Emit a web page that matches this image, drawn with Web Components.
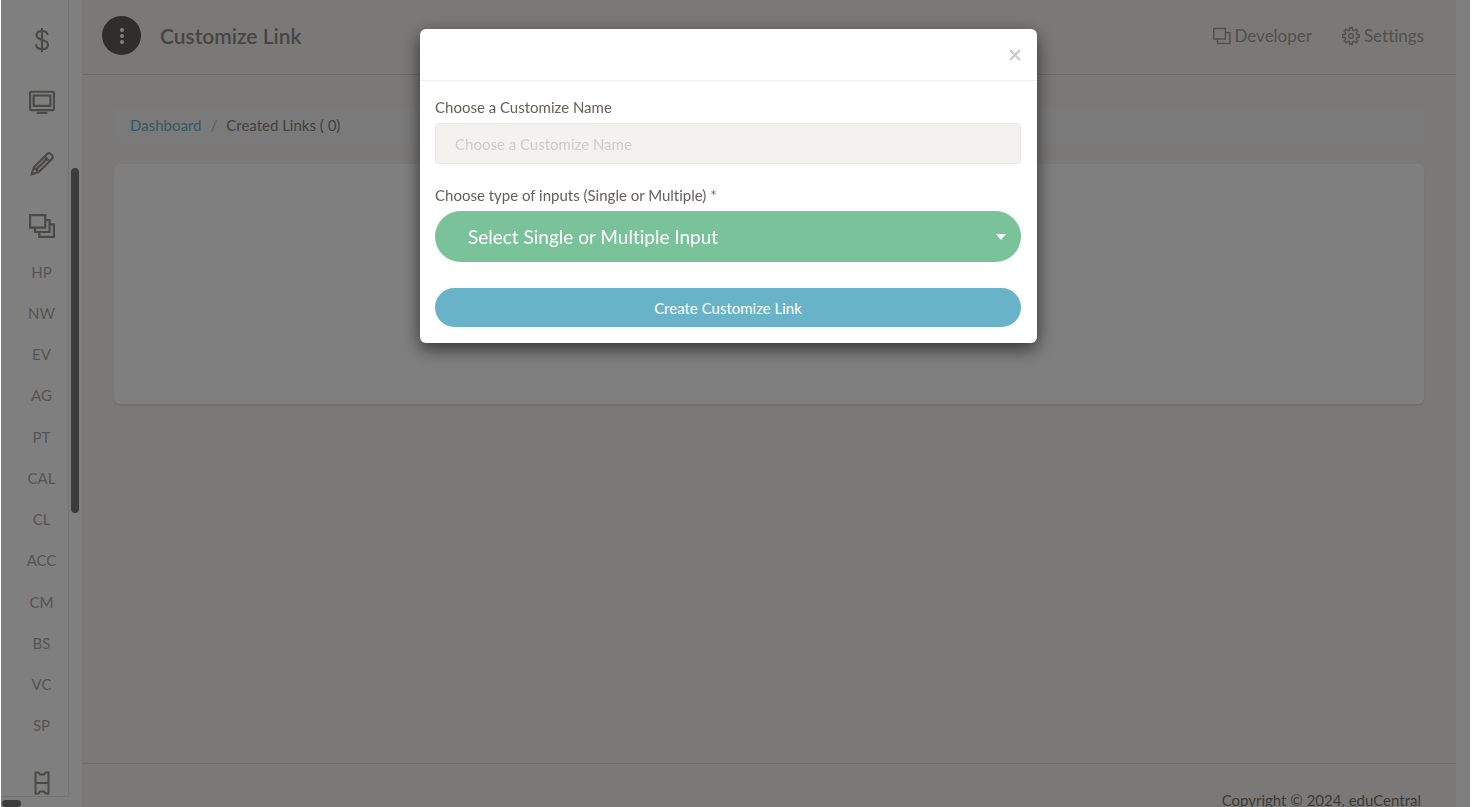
<!DOCTYPE html>
<html lang="en">
<head>
<meta charset="utf-8">
<title>Customize Link</title>
<style>
    html, body{
        height: 100%;
        margin: 0;
    }

    body{
        overflow: hidden;
        background: #fff;
        font-family: Lato, "Noto Sans", sans-serif;
        font-size: 15px;
        font-variant-ligatures: none;
        line-height: 20px;
        color: #84827f;
        --blue: #68b3c8;
        --green: #7ac29a;
        --ground: #f4f3ef;
    }
</style>
</head>
<body>
<app-shell>
    <side-menu slot="side"></side-menu>
    <top-bar slot="main" heading="Customize Link">
        <tool-link icon="layers2">Developer</tool-link>
        <tool-link icon="settings">Settings</tool-link>
    </top-bar>
    <link-page slot="main">Created Links ( 0)</link-page>
    <page-footer slot="main">Copyright © 2024, eduCentral</page-footer>
</app-shell>
<modal-dialog>
    <link-form></link-form>
</modal-dialog>

<script>
const ICONS = {
    money: '<path d="M12 1v22M17 7.500C17 5 15 3.700 12 3.700S7 5.200 7 7.700c0 5.600 10.500 3 10.500 8.600 0 2.700-2.300 4.200-5.500 4.200s-5.500-1.800-5.500-4.500"/>',
    desktop: '<rect x="1" y="2.500" width="22" height="17" rx="1"/><path d="M4.300 6h15.400v9.500H4.300z"/><path d="M7 22h10" />',
    pencil: '<path d="M2.500 21.500l2-6.500L17 2.500c2-1.500 6 2 4.500 4.500L9 19.500zM4.500 15l4.500 4.500M14.500 5l4.500 4.500M6.500 17.200L17 6.800"/>',
    layers: '<path d="M1 2h14v11.500H1z"/><path d="M5.500 13.500v4H19V6.500h-4M9.500 17.500v4.500H23V10.500h-4"/>',
    layers2: '<path d="M1 2h15.500v14H1z"/><path d="M6 16v6h16.500V7.500h-6"/>',
    ticket: '<path d="M5.500 1.500h3l1.500 2h4l1.500-2h3v21h-3l-1.500-2h-4l-1.500 2h-3zM5.500 12h13"/>',
    settings: '<circle cx="12" cy="12" r="3"/><path d="M10.300 1h3.400l.5 3.200 1.800.8 2.700-2 2.300 2.300-2 2.700.8 1.800 3.200.5v3.400l-3.200.5-.8 1.800 2 2.700-2.300 2.300-2.700-2-1.800.8-.5 3.200h-3.400l-.5-3.200-1.800-.8-2.700 2L3 18.700 5 16l-.8-1.800L1 13.700v-3.400l3.200-.5L5 8 3 5.300 5.300 3 8 5l1.800-.8z"/>'
}

function icon(name, size){
    return `<svg width="${size}" height="${size}" viewBox="0 0 24 24" fill="none" stroke="currentColor" stroke-width="2" aria-hidden="true">${ICONS[name]}</svg>`
}

class AppShell extends HTMLElement{

    connectedCallback(){
        this.attachShadow({mode: 'open'}).innerHTML = `
        <style>
        :host{
            display: flex;
            height: 100%;
            margin: 0 2px 0 1px;
        }

        main{
            flex: 1;
            display: flex;
            flex-direction: column;
            margin-right: 14px;
            background: var(--ground);
        }
        </style>
        <slot name="side"></slot>
        <main><slot name="main"></slot></main>
        `
    }
}

class SideMenu extends HTMLElement{

    connectedCallback(){
        const icons = [['money', 'Payments'], ['desktop', 'Desktop'], ['pencil', 'Edit'], ['layers', 'Pages']]
        const codes = ['HP', 'NW', 'EV', 'AG', 'PT', 'CAL', 'CL', 'ACC', 'CM', 'BS', 'VC', 'SP']
        this.attachShadow({mode: 'open'}).innerHTML = `
        <style>
        :host{
            display: flex;
            position: relative;
            width: 81px;
            box-sizing: border-box;
            padding-bottom: 10px;
        }

        nav{
            display: flex;
            flex-direction: column;
            width: 67px;
            padding-top: 3px;
            border-right: 1px solid #eae9e6;
            border-bottom: 1px solid #eae9e6;
        }

        a{
            display: flex;
            align-items: center;
            justify-content: center;
            text-decoration: none;
        }

        .icon{
            height: 50px;
            padding: 12px 0 0 15px;
            color: #94928f;
        }

        .codes{
            flex: 1;
            display: flex;
            flex-direction: column;
        }

        .code{
            flex: 1;
            padding-left: 14px;
            color: #aaa8a6;
        }

        .last{
            height: 26px;
            padding-top: 24px;
        }

        /* scrollbar thumbs float over the menu edges */
        .thumb{
            position: absolute;
            border-radius: 4px;
            background: #787878;
        }

        .vertical{
            top: 168px;
            right: 3px;
            width: 8px;
            height: 345px;
        }

        .horizontal{
            left: 1px;
            bottom: 0;
            width: 19px;
            height: 7px;
        }
        </style>
        <nav>
            ${icons.map(([name, label]) => `<a class="icon" href="#" aria-label="${label}">${icon(name, 26)}</a>`).join('')}
            <div class="codes">
                ${codes.map(code => `<a class="code" href="#">${code}</a>`).join('')}
            </div>
            <a class="icon last" href="#" aria-label="Tickets">${icon('ticket', 24)}</a>
        </nav>
        <span class="thumb vertical"></span>
        <span class="thumb horizontal"></span>
        `
    }
}

class TopBar extends HTMLElement{

    connectedCallback(){
        this.attachShadow({mode: 'open'}).innerHTML = `
        <style>
        :host{
            display: flex;
            align-items: center;
            gap: 19px;
            padding: 16px 32px 19px 20px;
            border-bottom: 1px solid #d6d4ce;
        }

        button{
            display: flex;
            align-items: center;
            justify-content: center;
            width: 39px;
            height: 39px;
            padding: 0;
            border: 0;
            border-radius: 50%;
            background: #605d58;
        }

        h1{
            margin: 0;
            font-size: 21px;
            font-weight: 600;
            color: #8a8a8a;
        }

        .tools{
            display: flex;
            gap: 30px;
            margin-left: auto;
        }
        </style>
        <button type="button" aria-label="Toggle menu">
            <svg width="4" height="16" viewBox="0 0 4 16" fill="#fff"><circle cx="2" cy="2" r="2"/><circle cx="2" cy="8" r="2"/><circle cx="2" cy="14" r="2"/></svg>
        </button>
        <h1>${this.getAttribute('heading')}</h1>
        <div class="tools"><slot></slot></div>
        `
    }
}

class ToolLink extends HTMLElement{

    connectedCallback(){
        this.attachShadow({mode: 'open'}).innerHTML = `
        <style>
        a{
            display: flex;
            align-items: center;
            gap: 4px;
            font-size: 17px;
            color: #a3a19d;
            text-decoration: none;
        }
        </style>
        <a href="#">${icon(this.getAttribute('icon'), 18)}<slot></slot></a>
        `
    }
}

class LinkPage extends HTMLElement{

    connectedCallback(){
        this.attachShadow({mode: 'open'}).innerHTML = `
        <style>
        :host{
            display: flex;
            flex-direction: column;
            gap: 21px;
            flex: 1;
            padding: 32px 32px 0;
        }

        nav{
            display: flex;
            gap: 9px;
            padding: 8px 16px;
            border-radius: 4px;
            background: #f5f5f6;
        }

        a{
            color: var(--blue);
            text-decoration: none;
        }

        .slash{
            color: #b8b8b8;
        }

        .card{
            height: 240px;
            border-radius: 6px;
            background: #fff;
            box-shadow: 0 2px 2px rgba(204, 197, 185, .5);
        }
        </style>
        <nav aria-label="Breadcrumb">
            <a href="#">Dashboard</a>
            <span class="slash">/</span>
            <span><slot></slot></span>
        </nav>
        <section class="card"></section>
        `
    }
}

class PageFooter extends HTMLElement{

    connectedCallback(){
        this.attachShadow({mode: 'open'}).innerHTML = `
        <style>
        footer{
            height: 17px;
            padding: 26px 35px 0;
            border-top: 1px solid #dcdad4;
            text-align: right;
            color: #7a7670;
        }
        </style>
        <footer><slot></slot></footer>
        `
    }
}

class ModalDialog extends HTMLElement{

    connectedCallback(){
        this.attachShadow({mode: 'open'}).innerHTML = `
        <style>
        /* the backdrop lies over the whole page */
        :host{
            position: fixed;
            inset: 0 2px 0 1px;
            display: flex;
            align-items: flex-start;
            justify-content: center;
            padding: 29px 14px 0 0;
            background: rgba(0, 0, 0, .5);
        }

        .dialog{
            width: 100%;
            max-width: 617px;
            border-radius: 6px;
            background: #fff;
            box-shadow: 0 6px 18px rgba(0, 0, 0, .6);
        }

        header{
            display: flex;
            justify-content: flex-end;
            padding: 16px;
            border-bottom: 1px solid #eee;
        }

        button{
            display: flex;
            align-items: center;
            height: 19px;
            padding: 0;
            border: 0;
            background: none;
            color: #c8c8c8;
        }
        </style>
        <div class="dialog" role="dialog" aria-modal="true" aria-label="Create link">
            <header>
                <button type="button" aria-label="Close">
                    <svg width="12" height="12" viewBox="0 0 12 12" fill="none" stroke="currentColor" stroke-width="2"><path d="M1 1l10 10M11 1L1 11"/></svg>
                </button>
            </header>
            <slot></slot>
        </div>
        `
        this.shadowRoot.querySelector('button').addEventListener('click', () => this.remove())
    }
}

class LinkForm extends HTMLElement{

    connectedCallback(){
        this.attachShadow({mode: 'open'}).innerHTML = `
        <style>
        form{
            display: flex;
            flex-direction: column;
            padding: 16px 16px 16px 15px;
            color: #66615b;
        }

        label{
            margin-bottom: 6px;
        }

        input, select, button{
            width: 100%;
            box-sizing: border-box;
            font: inherit;
        }

        input{
            height: 41px;
            margin-bottom: 21px;
            padding: 0 19px;
            border: 1px solid #e8e7e3;
            border-radius: 4px;
            background: #f3f2ee;
        }

        input::placeholder{
            color: #cfcdc8;
            opacity: 1;
        }

        .select{
            display: grid;
            align-items: center;
            margin-bottom: 26px;
            color: #fff;
        }

        .select > *{
            grid-area: 1 / 1;
        }

        .select svg{
            justify-self: end;
            margin-right: 15px;
            pointer-events: none;
        }

        select{
            height: 51px;
            padding: 0 33px;
            border: 0;
            border-radius: 26px;
            appearance: none;
            background: var(--green);
            color: #fff;
            font-size: 19px;
        }

        button{
            height: 39px;
            border: 0;
            border-radius: 20px;
            background: var(--blue);
            color: #fff;
        }
        </style>
        <form>
            <label for="name">Choose a Customize Name</label>
            <input id="name" type="text" placeholder="Choose a Customize Name">
            <label for="type">Choose type of inputs (Single or Multiple) *</label>
            <div class="select">
                <select id="type">
                    <option>Select Single or Multiple Input</option>
                    <option>Single</option>
                    <option>Multiple</option>
                </select>
                <svg width="10" height="6" viewBox="0 0 10 6" fill="currentColor" aria-hidden="true"><path d="M0 0h10L5 6z"/></svg>
            </div>
            <button type="button">Create Customize Link</button>
        </form>
        `
    }
}

customElements.define('app-shell', AppShell)
customElements.define('side-menu', SideMenu)
customElements.define('top-bar', TopBar)
customElements.define('tool-link', ToolLink)
customElements.define('link-page', LinkPage)
customElements.define('page-footer', PageFooter)
customElements.define('modal-dialog', ModalDialog)
customElements.define('link-form', LinkForm)
</script>
</body>
</html>
